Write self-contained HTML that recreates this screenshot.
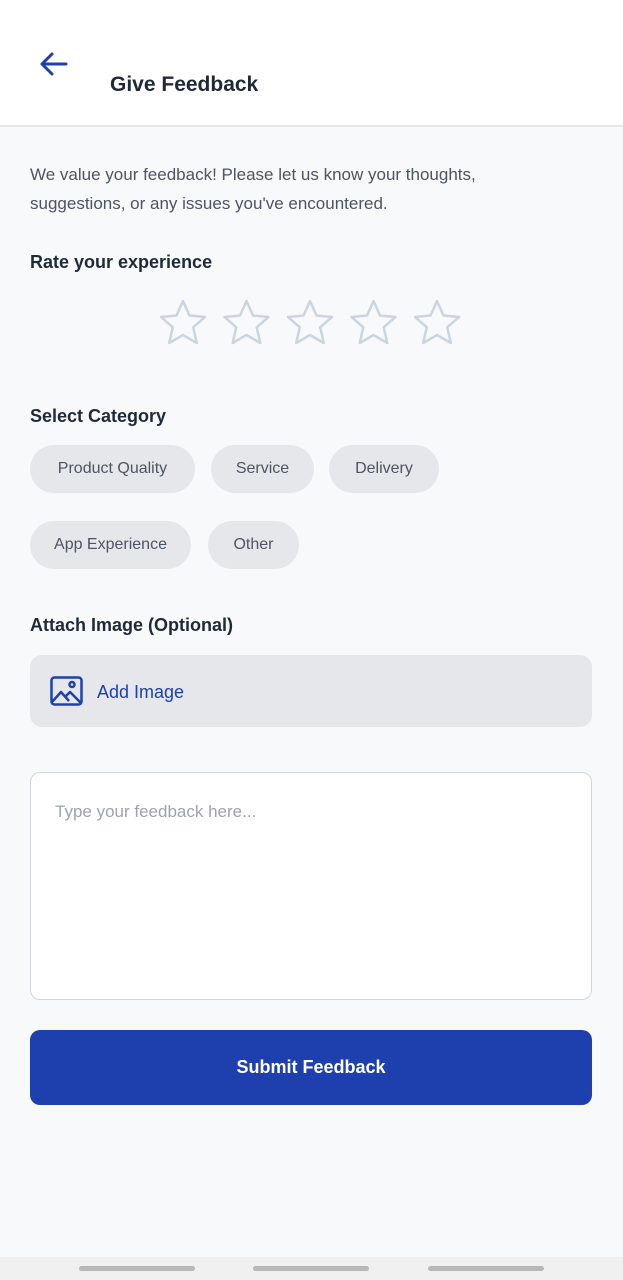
<!DOCTYPE html>
<html><head><meta charset="utf-8"><style>
*{margin:0;padding:0;box-sizing:border-box}
body{width:623px;height:1280px;background:#f8f9fb;font-family:"Liberation Sans",sans-serif;position:relative;overflow:hidden;color:#1f2937}
.hdr{position:absolute;left:0;top:0;width:623px;height:127px;background:#fff;border-bottom:2px solid #e5e7eb}
.abs{position:absolute}
.chip{position:absolute;height:48px;border-radius:24px;background:#e5e7eb;color:#4b5563;font-size:16px;display:flex;align-items:center;justify-content:center}
.lbl{position:absolute;left:30px;font-size:18px;font-weight:bold;color:#1f2937}
</style></head><body>
<div class="hdr">
<svg class="abs" style="left:38px;top:50px" width="32" height="28" viewBox="0 0 32 28"><path d="M28 14H4M14 4L4 14l10 10" fill="none" stroke="#1e40af" stroke-width="3" stroke-linecap="round" stroke-linejoin="round"/></svg>
<div class="abs" style="left:110px;top:73px;font-size:21px;font-weight:bold;color:#1f2937">Give Feedback</div>
</div>
<div class="abs" style="left:30px;top:160px;font-size:17px;line-height:29px;color:#4b5563;width:500px">We value your feedback! Please let us know your thoughts, suggestions, or any issues you've encountered.</div>
<div class="lbl" style="top:252px">Rate your experience</div>
<svg class="abs" style="left:158px;top:298px" width="310" height="50" viewBox="0 0 310 50">
<g fill="none" stroke="#cbd5e1" stroke-width="2.5" stroke-linejoin="round">
<path id="s" d="M25 3l6.5 14.5 15.5 1.5-11.8 10.3 3.6 15.7L25 37l-13.8 8 3.6-15.7L3 19l15.5-1.5z"/>
<use href="#s" x="63.5"/><use href="#s" x="127"/><use href="#s" x="190.5"/><use href="#s" x="254"/>
</g></svg>
<div class="lbl" style="top:406px">Select Category</div>
<div class="chip" style="left:30px;top:445px;width:165px">Product Quality</div>
<div class="chip" style="left:211px;top:445px;width:103px">Service</div>
<div class="chip" style="left:329px;top:445px;width:110px">Delivery</div>
<div class="chip" style="left:30px;top:521px;width:161px">App Experience</div>
<div class="chip" style="left:208px;top:521px;width:91px">Other</div>
<div class="lbl" style="top:615px">Attach Image (Optional)</div>
<div class="abs" style="left:30px;top:655px;width:562px;height:72px;background:#e5e7eb;border-radius:12px"></div>
<svg class="abs" style="left:50px;top:676px" width="33" height="30" viewBox="0 0 33 30"><g fill="none" stroke="#1e40af" stroke-width="2.5" stroke-linejoin="round"><rect x="1.5" y="1.5" width="30" height="27" rx="3"/><path d="M2 26l9-10 8 9M15 21l5-5 11 11"/><circle cx="22" cy="8.5" r="2.5"/></g></svg>
<div class="abs" style="left:97px;top:682px;font-size:18px;color:#1e40af">Add Image</div>
<div class="abs" style="left:30px;top:772px;width:562px;height:228px;background:#fff;border:1.5px solid #d1d5db;border-radius:10px"></div>
<div class="abs" style="left:55px;top:802px;font-size:17px;color:#9ca3af">Type your feedback here...</div>
<div class="abs" style="left:30px;top:1030px;width:562px;height:75px;background:#1e40af;border-radius:10px;color:#fff;font-size:18px;font-weight:bold;display:flex;align-items:center;justify-content:center">Submit Feedback</div>
<div class="abs" style="left:0;top:1257px;width:623px;height:23px;background:#f0f0f0"></div>
<div class="abs" style="left:79px;top:1266px;width:116px;height:5px;border-radius:3px;background:#b8b8b8"></div>
<div class="abs" style="left:253px;top:1266px;width:116px;height:5px;border-radius:3px;background:#b8b8b8"></div>
<div class="abs" style="left:428px;top:1266px;width:116px;height:5px;border-radius:3px;background:#b8b8b8"></div>
</body></html>
